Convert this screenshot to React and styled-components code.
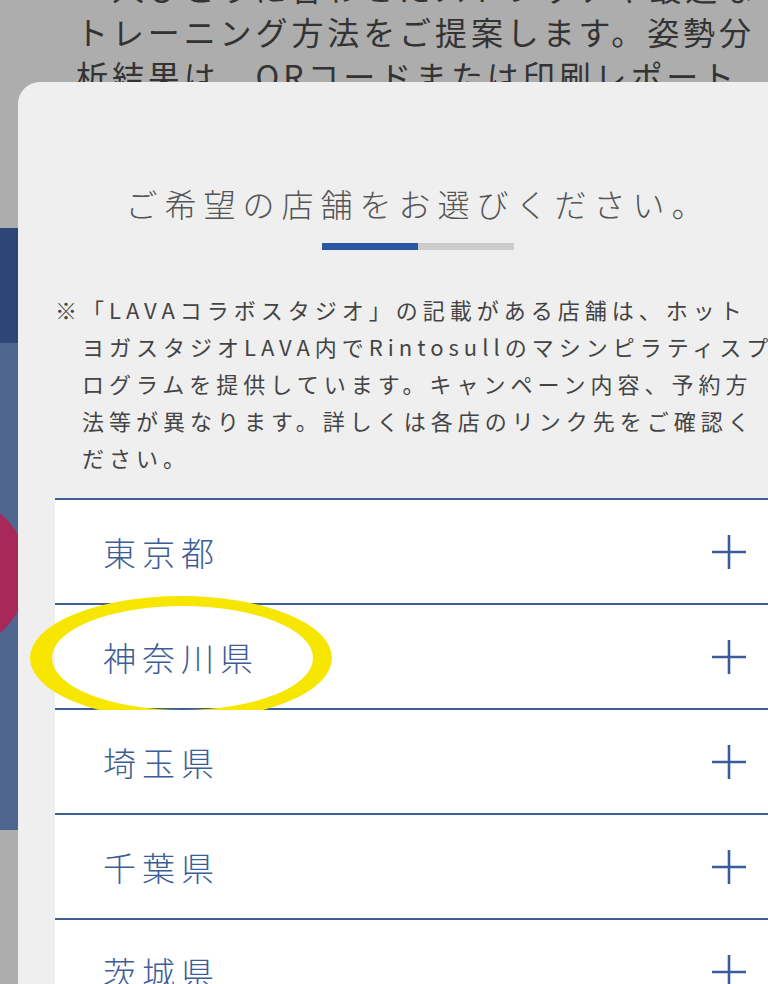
import React from "react";
import styled, { createGlobalStyle } from "styled-components";

const GlobalStyle = createGlobalStyle`
  html, body {
    margin: 0;
    padding: 0;
    overflow: hidden;
    background: #adadad;
  }
  body {
    font-family: "Noto Sans CJK JP", "Noto Sans", sans-serif;
  }
`;

const prefectures = ["東京都", "神奈川県", "埼玉県", "千葉県", "茨城県"];

export default function App() {
  return (
    <Screen>
      <GlobalStyle />
      <Backdrop>
        <Intro>
          <p>
            一人ひとりに合わせたストレッチや最適な
            <br />
            トレーニング方法をご提案します。姿勢分
            <br />
            析結果は、QRコードまたは印刷レポート
          </p>
        </Intro>
        <Banner />
        <Hero>
          <Dot />
        </Hero>
        <Rest />
      </Backdrop>

      <Sheet>
        <Title>ご希望の店舗をお選びください。</Title>
        <Progress>
          <ProgressFill style={{ width: "50%" }} />
        </Progress>
        <Note>
          ※「LAVAコラボスタジオ」の記載がある店舗は、ホット
          <br />
          ヨガスタジオLAVA内でRintosullのマシンピラティスプ
          <br />
          ログラムを提供しています。キャンペーン内容、予約方
          <br />
          法等が異なります。詳しくは各店のリンク先をご確認く
          <br />
          ださい。
        </Note>
        <PrefList>
          {prefectures.map((name) => (
            <Row key={name}>
              <RowLabel>{name}</RowLabel>
              <PlusIcon viewBox="0 0 34 34">
                <line x1="17" y1="0" x2="17" y2="34" />
                <line x1="0" y1="17" x2="34" y2="17" />
              </PlusIcon>
              {name === "神奈川県" && (
                <Highlight viewBox="0 0 302 124">
                  <path
                    fillRule="evenodd"
                    d="M0,62 a151,62 0 1,0 302,0 a151,62 0 1,0 -302,0 Z M22,62 a130.5,52 0 1,0 261,0 a130.5,52 0 1,0 -261,0 Z"
                  />
                </Highlight>
              )}
            </Row>
          ))}
        </PrefList>
      </Sheet>
    </Screen>
  );
}

const Screen = styled.div`
  position: relative;
  width: 768px;
  height: 984px;
  overflow: hidden;
`;

const Backdrop = styled.div`
  display: flex;
  flex-direction: column;
  height: 984px;
`;

const Intro = styled.section`
  flex-shrink: 0;
  height: 228px;
  background: #adadad;
  padding-left: 76px;
  p {
    margin: -35px 0 0;
    font-size: 32px;
    line-height: 44px;
    letter-spacing: 3.9px;
    color: #333;
    white-space: nowrap;
  }
`;

const Banner = styled.div`
  flex-shrink: 0;
  height: 115px;
  background: #2e4577;
`;

const Hero = styled.div`
  flex-shrink: 0;
  position: relative;
  height: 487px;
  background: #4e6690;
  overflow: hidden;
`;

const Dot = styled.span`
  position: absolute;
  left: -128px;
  top: 152px;
  width: 156px;
  height: 156px;
  border-radius: 50%;
  background: #a8285a;
`;

const Rest = styled.div`
  flex: 1;
  background: #adadad;
`;

const Sheet = styled.div`
  position: absolute;
  top: 82px;
  left: 18px;
  width: 800px;
  bottom: 0;
  box-sizing: border-box;
  padding: 97px 37px 0;
  background: #efefef;
  border-radius: 22px 22px 0 0;
`;

const Title = styled.h2`
  margin: 0;
  text-align: center;
  font-size: 32px;
  line-height: 48px;
  font-weight: 300;
  letter-spacing: 7px;
  color: #555;
  white-space: nowrap;
`;

const Progress = styled.div`
  margin: 16px auto 0;
  width: 192px;
  height: 7px;
  background: #cccccc;
`;

const ProgressFill = styled.div`
  height: 100%;
  background: #2b57a2;
`;

const Note = styled.p`
  margin: 41px 0 0;
  padding-left: 27px;
  text-indent: -27px;
  font-size: 22px;
  line-height: 37px;
  letter-spacing: 5px;
  color: #444;
  white-space: nowrap;
`;

const PrefList = styled.ul`
  list-style: none;
  margin: 22px 0 0;
  padding: 0;
  border-top: 2px solid #3d5e99;
`;

const Row = styled.li`
  position: relative;
  height: 103px;
  display: flex;
  align-items: center;
  justify-content: space-between;
  padding: 0 35px 0 48px;
  background: #fff;
  border-bottom: 2px solid #3d5e99;
`;

const RowLabel = styled.span`
  font-size: 33px;
  font-weight: 300;
  letter-spacing: 6px;
  color: #3d5d97;
`;

const PlusIcon = styled.svg`
  width: 34px;
  height: 34px;
  stroke: #3a5c9b;
  stroke-width: 2.6;
  fill: none;
`;

const Highlight = styled.svg`
  position: absolute;
  left: -25px;
  top: -9px;
  width: 302px;
  height: 124px;
  fill: #f6e600;
  pointer-events: none;
`;
